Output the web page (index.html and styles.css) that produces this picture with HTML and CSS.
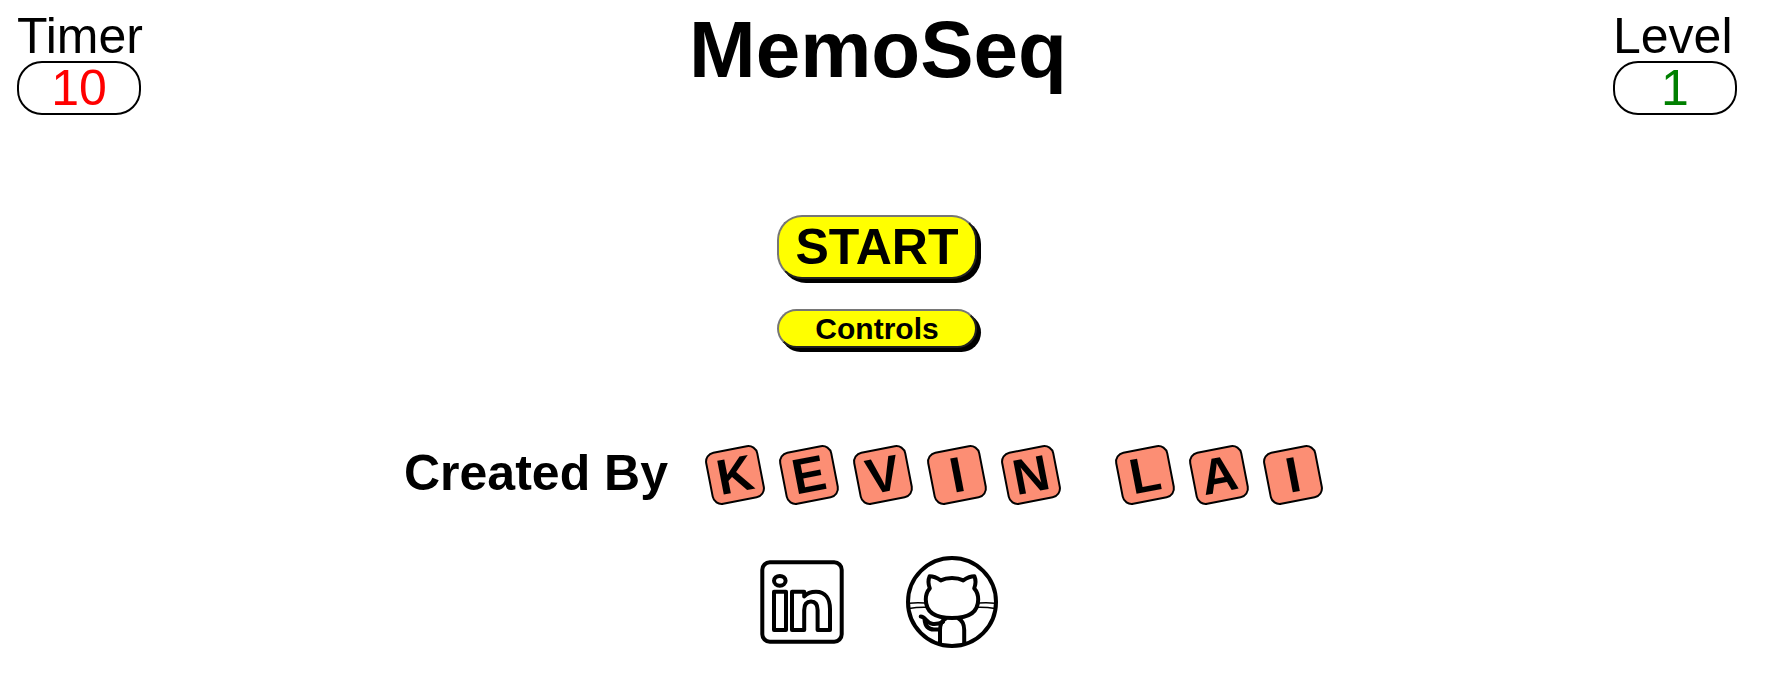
FILE: index.html
```html
<!DOCTYPE html>
<html lang="en">
<head>
<meta charset="utf-8">
<title>MemoSeq</title>
<link rel="stylesheet" href="styles.css">
</head>
<body>
<header class="header">
  <div class="stat">
    <span class="stat-label">Timer</span>
    <span class="stat-value timer">10</span>
  </div>
  <h1 class="title">MemoSeq</h1>
  <div class="stat">
    <span class="stat-label">Level</span>
    <span class="stat-value level">1</span>
  </div>
</header>
<main class="menu">
  <button class="btn btn-start" type="button">START</button>
  <button class="btn btn-controls" type="button">Controls</button>
</main>
<footer class="footer">
  <div class="credits">
    <h2 class="credits-label">Created By</h2>
    <div class="name">
      <div class="word">
        <span class="tile">K</span><span class="tile">E</span><span class="tile">V</span><span class="tile">I</span><span class="tile">N</span>
      </div>
      <div class="word">
        <span class="tile">L</span><span class="tile">A</span><span class="tile">I</span>
      </div>
    </div>
  </div>
  <nav class="links">
    <a href="#linkedin" aria-label="LinkedIn">
      <svg class="icon" viewBox="0 0 100 100">
        <rect x="10.3" y="10.3" width="79.4" height="79.4" rx="7.5"/>
        <ellipse cx="27.8" cy="28.8" rx="5.8" ry="4.9"/>
        <rect x="22" y="39.7" width="12" height="38.3"/>
        <path d="M40 39.7H52.2V44.5C55 41.3 59.5 39.7 64 39.7C73.5 39.7 78 47 78 57V78H65.6V58C65.6 52.5 63.2 49.4 59 49.4C54.6 49.4 52.2 52.5 52.2 58V78H40Z"/>
      </svg>
    </a>
    <a href="#github" aria-label="GitHub">
      <svg class="icon" viewBox="0 0 100 100">
        <circle cx="50" cy="50" r="44"/>
        <path d="M50 26C46 26 42 26.7 38.7 28.4C35.5 26.2 31.5 24.3 27.6 24.3C26 28 26.3 32.5 27.8 36.4C25 39.5 23.8 43 23.8 47.5C23.8 60 33 66 50 66C67 66 76.2 60 76.2 47.5C76.2 43 75 39.5 72.2 36.4C73.7 32.5 74 28 72.4 24.3C68.5 24.3 64.5 26.2 61.3 28.4C58 26.7 54 26 50 26Z"/>
        <path d="M38 93V78C38 72 40.5 68 44.5 66M62.2 93V78C62.2 72 59.7 68 55.7 66"/>
        <path class="tail" d="M18.7 64.5C24 64.500 24 71.500 31 72C35.500 72.300 38 71.500 41 70M22.500 67C23 73.500 26 77.500 32 77.500H38"/>
        <path class="whisker" d="M7 51.2Q15 50.3 23 51M7 56.6Q15 55 24 55.2M93 51.2Q85 50.3 77 51M93 56.6Q85 55 76 55.2"/>
      </svg>
    </a>
  </nav>
</footer>
</body>
</html>
```

FILE: styles.css
```css
body {
  margin: 0;
  background: #fff;
  color: #000;
  font-family: "Liberation Sans", Arial, sans-serif;
}

.header {
  display: flex;
  justify-content: space-between;
  align-items: flex-start;
  padding: 12px 28px 0 17px;
}

.stat {
  display: flex;
  flex-direction: column;
  align-items: flex-start;
  font-size: 50px;
}

.stat-label {
  line-height: 49px;
}

.stat-value {
  width: 120px;
  border: 2px solid #000;
  border-radius: 25px;
  line-height: 50px;
  text-align: center;
}

.timer {
  color: red;
}

.level {
  color: green;
}

.title {
  margin: 0;
  font-size: 80px;
  line-height: 76px;
}

.menu {
  display: flex;
  flex-direction: column;
  align-items: center;
  gap: 30px;
  padding: 100px 11px 0 0;
}

.btn {
  width: 200px;
  padding: 0;
  border: 2px solid;
  border-color: #767676 #212121 #212121 #767676;
  border-radius: 25px;
  background: yellow;
  box-shadow: 4px 4px #000;
  color: #000;
  font-family: inherit;
  font-weight: bold;
  cursor: pointer;
}

.btn-start {
  font-size: 50px;
  line-height: 60px;
}

.btn-controls {
  font-size: 30px;
  line-height: 35px;
}

.footer {
  padding: 97px 11px 0 0;
}

.credits {
  display: flex;
  justify-content: center;
  align-items: flex-end;
  gap: 40px;
  padding-right: 30px;
}

.credits-label {
  margin: 0;
  font-size: 50px;
  line-height: 57px;
}

.name {
  display: flex;
  gap: 60px;
}

.word {
  display: flex;
  gap: 20px;
}

.tile {
  width: 50px;
  border: 2px solid #000;
  border-radius: 10px;
  background: #fc8e74;
  font-size: 50px;
  font-weight: bold;
  line-height: 50px;
  text-align: center;
  transform: rotate(-11deg);
}

.links {
  display: flex;
  justify-content: center;
  gap: 50px;
  padding-top: 50px;
}

.icon {
  display: block;
  width: 100px;
  fill: none;
  stroke: #000;
  stroke-width: 4;
  stroke-linejoin: round;
}

.icon .tail {
  stroke-linecap: round;
}

.icon .whisker {
  stroke-width: 1.5;
}
```
